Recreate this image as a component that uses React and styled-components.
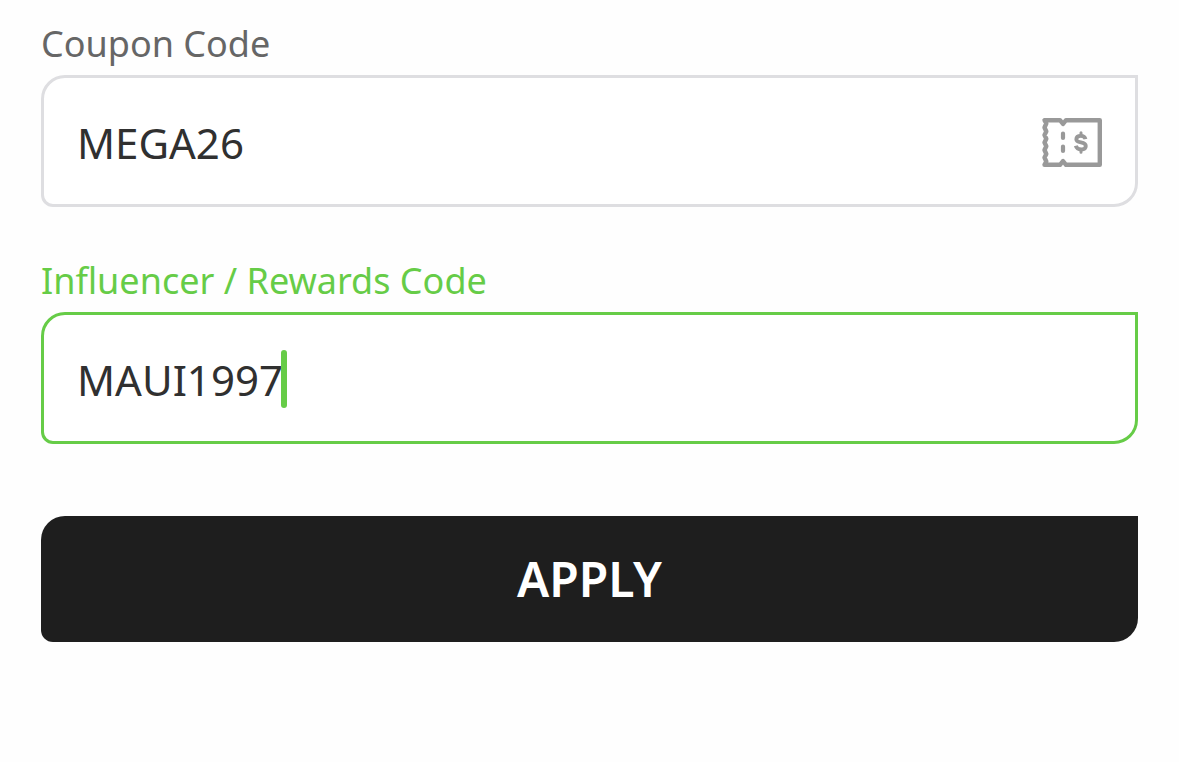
import React, { useState } from 'react';
import styled, { createGlobalStyle, ThemeProvider } from 'styled-components';

const theme = {
  green: '#66cc47',
  border: '#dedee1',
  label: '#666666',
  text: '#303030',
  dark: '#1e1e1e',
  icon: '#999999',
  leaf: '24px 0 24px 12px',
};

const GlobalStyle = createGlobalStyle`
  *, *::before, *::after { box-sizing: border-box; }
  body { margin: 0; background: #fefefe; font-family: 'Noto Sans', sans-serif; }
`;

const Form = styled.form`
  display: flex;
  flex-direction: column;
  padding: 20px 41px;
`;

const Field = styled.div`
  display: flex;
  flex-direction: column;
  gap: 7px;
  margin-bottom: ${(p) => (p.$last ? 72 : 50)}px;
`;

const Label = styled.label`
  font-size: 36px;
  line-height: 48px;
  color: ${(p) => (p.$active ? p.theme.green : p.theme.label)};
`;

const Box = styled.div`
  display: flex;
  align-items: center;
  height: 132px;
  padding: 2px 32px 0 33px;
  background: #fff;
  border: 3px solid ${(p) => (p.$active ? p.theme.green : p.theme.border)};
  border-radius: ${(p) => p.theme.leaf};
`;

const Input = styled.input`
  flex: ${(p) => (p.$active ? '0 1 auto' : '1')};
  field-sizing: ${(p) => (p.$active ? 'content' : 'fixed')};
  min-width: 0;
  padding: 2px 0 0;
  border: 0;
  outline: 0;
  background: transparent;
  font: 400 42px/60px 'Noto Sans', sans-serif;
  color: ${(p) => p.theme.text};
  caret-color: transparent;
`;

const Caret = styled.span`
  flex: none;
  width: 6px;
  height: 58px;
  margin-left: -2px;
  border-radius: 3px;
  background: ${(p) => p.theme.green};
`;

const Icon = styled.svg`
  flex: none;
  width: 62px;
  height: 52px;
  color: ${(p) => p.theme.icon};
`;

const ApplyButton = styled.button`
  height: 126px;
  border: 0;
  border-radius: ${(p) => p.theme.leaf};
  background: ${(p) => p.theme.dark};
  color: #fff;
  font: 600 48px/64px 'Noto Sans', sans-serif;
  cursor: pointer;
`;

function CouponIcon() {
  return (
    <Icon viewBox="0 0 62 52" fill="none" stroke="currentColor" strokeLinecap="round" strokeLinejoin="round" aria-hidden="true">
      <path
        strokeWidth="4.4"
        d="M3.500 4.200H19L22 8L25 4.200H58.800V48.800H25L22 45L19 48.800H3.500L5.300 45.500L3.500 41.500L5.300 38L3.500 34L5.300 30.300L3.500 26.500L5.300 22.700L3.500 19L5.300 15.500L3.500 11.500L5.300 7.500Z"
      />
      <path strokeWidth="4.2" d="M22 17.500V22M22 30.500V35" />
      <path
        strokeWidth="3.8"
        strokeLinecap="butt"
        d="M44.500 23.200C44 21 42.300 19.800 39.900 19.800C37 19.800 35.300 21.200 35.300 23.200C35.300 28 44.800 24.800 44.800 30C44.800 32.200 43 33.500 40.200 33.500C37.300 33.500 35.400 32.200 34.800 29.800"
      />
      <path strokeWidth="3" d="M40 16.800V19M40 34V36.300" />
    </Icon>
  );
}

export default function App() {
  const [coupon, setCoupon] = useState('MEGA26');
  const [reward, setReward] = useState('MAUI1997');

  return (
    <ThemeProvider theme={theme}>
      <GlobalStyle />
      <Form onSubmit={(e) => e.preventDefault()}>
        <Field>
          <Label htmlFor="coupon">Coupon Code</Label>
          <Box>
            <Input id="coupon" value={coupon} onChange={(e) => setCoupon(e.target.value)} />
            <CouponIcon />
          </Box>
        </Field>
        <Field $last>
          <Label htmlFor="reward" $active>Influencer / Rewards Code</Label>
          <Box $active>
            <Input id="reward" $active value={reward} onChange={(e) => setReward(e.target.value)} />
            <Caret />
          </Box>
        </Field>
        <ApplyButton type="submit">APPLY</ApplyButton>
      </Form>
    </ThemeProvider>
  );
}
